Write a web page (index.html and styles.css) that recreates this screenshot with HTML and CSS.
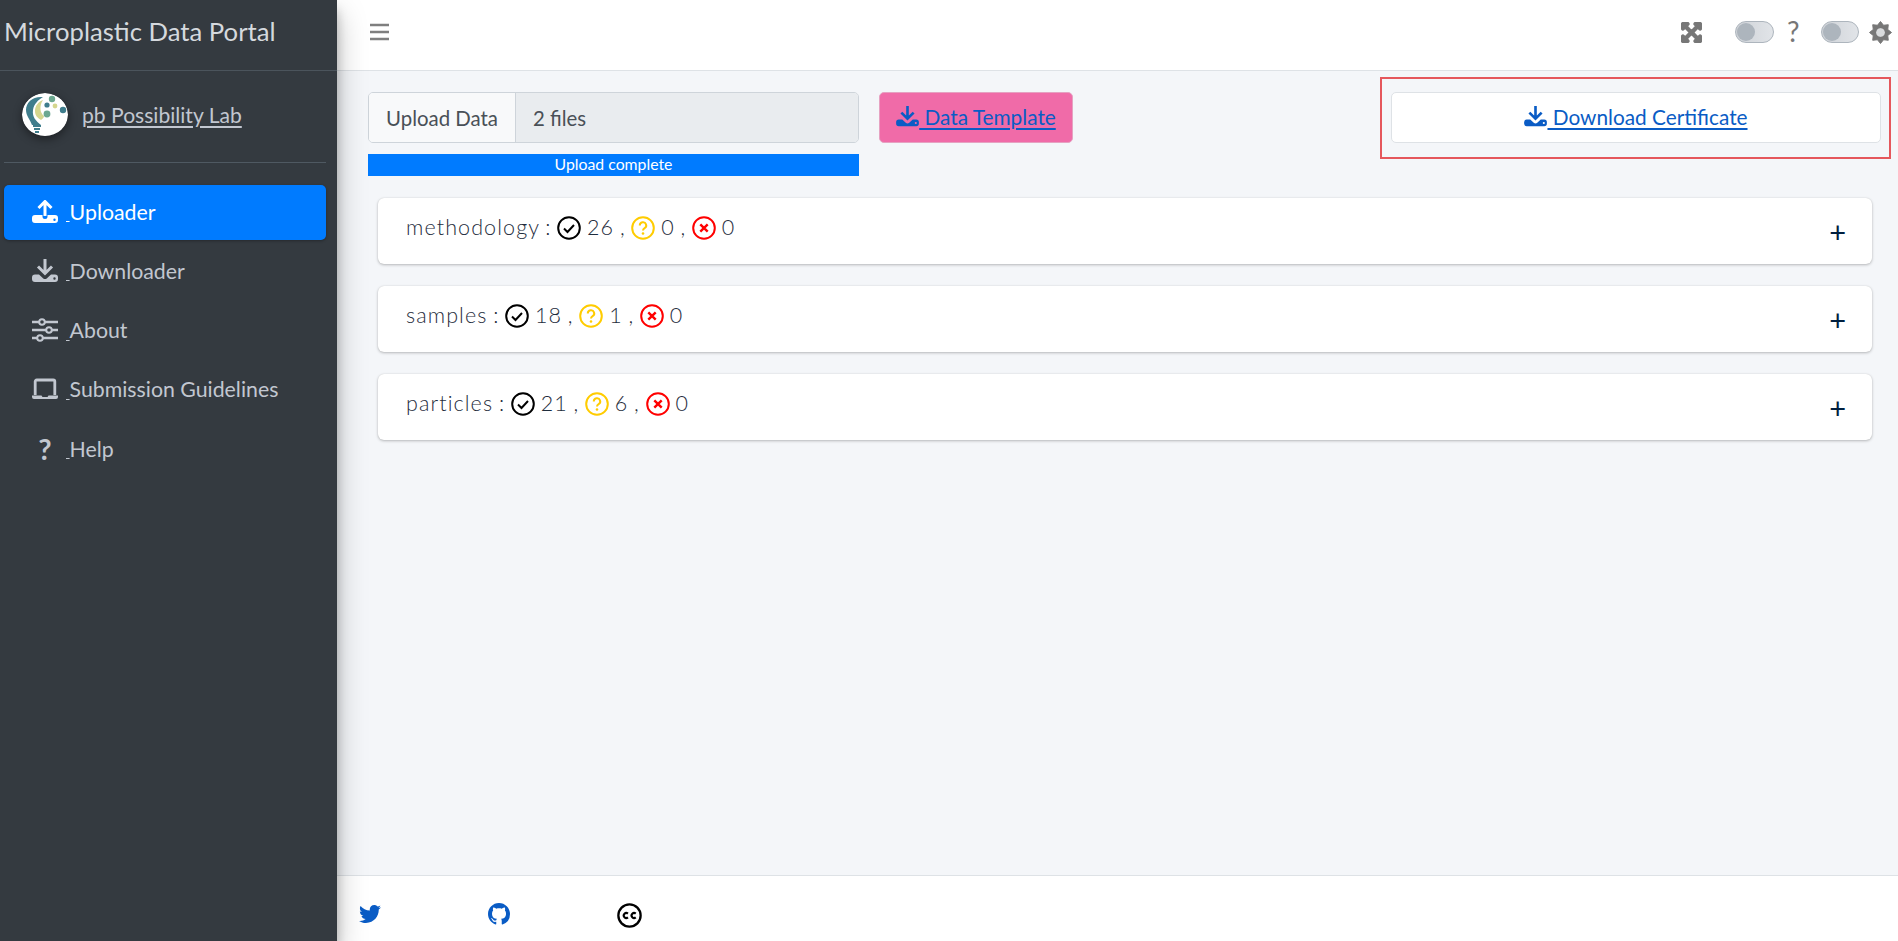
FILE: index.html
```html
<!DOCTYPE html>
<html lang="en">
<head>
<meta charset="utf-8">
<title>Microplastic Data Portal</title>
<link rel="stylesheet" href="styles.css">
</head>
<body>
<svg class="defs" width="0" height="0" aria-hidden="true">
  <defs>
    <symbol id="i-down" viewBox="0 0 26 24">
      <path d="M13 0v13.500M6 7.500l7 7 7-7" fill="none" stroke="currentColor" stroke-width="3"/>
      <path fill="currentColor" fill-rule="evenodd" d="M3 15.500h4l4 3.700a3 3 0 0 0 4 0l4-3.700h4a3 3 0 0 1 3 3v1.500a3 3 0 0 1-3 3H3a3 3 0 0 1-3-3v-1.500a3 3 0 0 1 3-3zm19.500 2.800a1.200 1.200 0 1 0 0 2.400 1.200 1.200 0 0 0 0-2.400z"/>
    </symbol>
    <symbol id="i-up" viewBox="0 0 26 24">
      <path d="M13 16V2M6.500 8L13 1.500 19.500 8" fill="none" stroke="currentColor" stroke-width="3"/>
      <path fill="currentColor" fill-rule="evenodd" d="M3 15h7.500v1.500a2.500 2.500 0 0 0 5 0V15H23a3 3 0 0 1 3 3v2a3 3 0 0 1-3 3H3a3 3 0 0 1-3-3v-2a3 3 0 0 1 3-3zm19.500 3.500a1.200 1.200 0 1 0 0 2.400 1.200 1.200 0 0 0 0-2.400z"/>
    </symbol>
    <symbol id="i-ok" viewBox="0 0 24 24">
      <circle cx="12" cy="12" r="10.800" fill="none" stroke="#000" stroke-width="2"/>
      <path d="M7 12.500l3.500 3.500L17 9" fill="none" stroke="#000" stroke-width="2"/>
    </symbol>
    <symbol id="i-warn" viewBox="0 0 24 24">
      <circle cx="12" cy="12" r="10.800" fill="none" stroke="#ffcc00" stroke-width="2"/>
      <path d="M8.800 9.500a3.200 3.200 0 1 1 4.800 2.700c-1 .6-1.600 1-1.600 2.300" fill="none" stroke="#ffcc00" stroke-width="2"/>
      <circle cx="12" cy="17.500" r="1.300" fill="#ffcc00"/>
    </symbol>
    <symbol id="i-bad" viewBox="0 0 24 24">
      <circle cx="12" cy="12" r="10.800" fill="none" stroke="#ff0000" stroke-width="2"/>
      <path d="M8.300 8.300l7.400 7.400M15.700 8.300l-7.400 7.400" fill="none" stroke="#ff0000" stroke-width="2.400"/>
    </symbol>
  </defs>
</svg>

<aside class="sidebar">
  <div class="brand">Microplastic Data Portal</div>
  <div class="user">
    <svg class="logo" viewBox="0 0 46 44" aria-hidden="true">
      <ellipse cx="23" cy="21.500" rx="23" ry="21.500" fill="#fff"/>
      <path d="M21 4C11 3 4 9 4 17c0 6 4 9 6 15h9c-5-4-9-8-8-15 1-6 5-10 10-13z" fill="#3f7d8c"/>
      <path d="M21 7c-5 2-8 6-8 11 0 5 3 7 6 9 2-1 3-3 3-4-4-3-5-10-1-16z" fill="#d5d68e"/>
      <path d="M11 33h8M12 36h6M13 39h4" stroke="#3f7d8c" stroke-width="2"/>
      <circle cx="30" cy="6" r="3.200" fill="#6ba78f"/>
      <circle cx="25" cy="12" r="2.600" fill="#3f7d8c"/>
      <circle cx="33" cy="13" r="2.400" fill="#d5d68e"/>
      <circle cx="25" cy="21" r="3.400" fill="#6ba78f"/>
      <circle cx="41" cy="17" r="3.200" fill="#3f7d8c"/>
    </svg>
    <a class="user-link" href="#">pb Possibility Lab</a>
  </div>
  <nav class="nav">
    <a class="nav-item active" href="#"><svg class="nav-icon"><use href="#i-up"/></svg><span class="gap">&nbsp;</span>Uploader</a>
    <a class="nav-item" href="#"><svg class="nav-icon"><use href="#i-down"/></svg><span class="gap">&nbsp;</span>Downloader</a>
    <a class="nav-item" href="#">
      <svg class="nav-icon" viewBox="0 0 26 24" aria-hidden="true">
        <path d="M0 4h26M0 12h26M0 20h26" stroke="currentColor" stroke-width="2.400"/>
        <circle cx="10" cy="4" r="2.800" fill="#343a40" stroke="currentColor" stroke-width="2"/>
        <circle cx="17" cy="12" r="2.800" fill="#343a40" stroke="currentColor" stroke-width="2"/>
        <circle cx="8" cy="20" r="2.800" fill="#343a40" stroke="currentColor" stroke-width="2"/>
      </svg><span class="gap">&nbsp;</span>About</a>
    <a class="nav-item" href="#">
      <svg class="nav-icon" viewBox="0 0 26 24" aria-hidden="true">
        <path d="M3.200 18V4.500A1.500 1.500 0 0 1 4.700 3h16.600a1.500 1.500 0 0 1 1.500 1.500V18" fill="none" stroke="currentColor" stroke-width="2.800"/>
        <path d="M0 18.500h9.500l1 1.500h5l1-1.500H26v1.500a2 2 0 0 1-2 2H2a2 2 0 0 1-2-2z" fill="currentColor"/>
      </svg><span class="gap">&nbsp;</span>Submission Guidelines</a>
    <a class="nav-item" href="#"><span class="nav-icon nav-q">?</span><span class="gap">&nbsp;</span>Help</a>
  </nav>
</aside>

<div class="main">
  <header class="topbar">
    <svg class="burger" viewBox="0 0 19 18" aria-hidden="true"><path d="M0 2h19M0 9h19M0 16h19" stroke="currentColor" stroke-width="2.600"/></svg>
    <div class="tools">
      <svg class="t-expand" viewBox="-20 12 488 488" aria-hidden="true"><path fill="currentColor" stroke="currentColor" stroke-width="44" stroke-linejoin="round" d="M448 344v112a23.940 23.940 0 0 1-24 24H312c-21.390 0-32.090-25.900-17-41l36.200-36.200L224 295.600 116.770 402.900 153 439c15.090 15.100 4.390 41-17 41H24a23.940 23.940 0 0 1-24-24V344c0-21.400 25.890-32.100 41-17l36.190 36.200L184.460 256 77.180 148.700 41 185c-15.100 15.100-41 4.400-41-17V56a23.940 23.940 0 0 1 24-24h112c21.390 0 32.090 25.900 17 41l-36.200 36.200L224 216.400l107.230-107.300L295 73c-15.090-15.100-4.390-41 17-41h112a23.940 23.940 0 0 1 24 24v112c0 21.400-25.890 32.100-41 17l-36.190-36.200L263.540 256l107.280 107.300L407 327.100c15.100-15.200 41-4.500 41 16.900z"/></svg>
      <span class="toggle first"></span>
      <span class="t-q">?</span>
      <span class="toggle second"></span>
      <svg class="t-gear" viewBox="0 0 24 24" aria-hidden="true"><path fill="currentColor" fill-rule="evenodd" stroke="currentColor" stroke-linejoin="round" d="M12 .5L15.140 4.420 20.130 3.870 19.580 8.860 23.500 12 19.580 15.140 20.130 20.130 15.140 19.580 12 23.500 8.860 19.580 3.870 20.130 4.420 15.140 .5 12 4.420 8.860 3.870 3.870 8.860 4.420zM12 7.500a4.500 4.500 0 1 0 0 9 4.500 4.500 0 0 0 0-9z"/><circle cx="12" cy="12" r="4.500" fill="#d9dbdd"/></svg>
    </div>
  </header>

  <section class="content">
    <div class="row">
      <div class="upload">
        <div class="input-group">
          <span class="ig-label">Upload Data</span>
          <span class="ig-value">2 files</span>
        </div>
        <div class="progress">Upload complete</div>
      </div>
      <a class="btn pink" href="#"><svg class="btn-icon"><use href="#i-down"/></svg><span> Data Template</span></a>
      <div class="redbox">
        <a class="btn white" href="#"><svg class="btn-icon"><use href="#i-down"/></svg><span> Download Certificate</span></a>
      </div>
    </div>

    <div class="cards">
      <div class="card">
        <span class="card-text">methodology : <svg class="st"><use href="#i-ok"/></svg> 26 , <svg class="st"><use href="#i-warn"/></svg> 0 , <svg class="st"><use href="#i-bad"/></svg> 0</span>
        <span class="plus">+</span>
      </div>
      <div class="card">
        <span class="card-text">samples : <svg class="st"><use href="#i-ok"/></svg> 18 , <svg class="st"><use href="#i-warn"/></svg> 1 , <svg class="st"><use href="#i-bad"/></svg> 0</span>
        <span class="plus">+</span>
      </div>
      <div class="card">
        <span class="card-text">particles : <svg class="st"><use href="#i-ok"/></svg> 21 , <svg class="st"><use href="#i-warn"/></svg> 6 , <svg class="st"><use href="#i-bad"/></svg> 0</span>
        <span class="plus">+</span>
      </div>
    </div>
  </section>

  <footer class="footer">
    <svg class="f-tw" viewBox="0 0 512 512" aria-hidden="true"><path fill="currentColor" d="M459.370 151.716c.325 4.548.325 9.097.325 13.645 0 138.720-105.583 298.558-298.558 298.558-59.452 0-114.680-17.219-161.137-47.106 8.447.974 16.568 1.299 25.340 1.299 49.055 0 94.213-16.568 130.274-44.832-46.132-.975-84.792-31.188-98.112-72.772 6.498.974 12.995 1.624 19.818 1.624 9.421 0 18.843-1.300 27.614-3.573-48.081-9.747-84.143-51.980-84.143-102.985v-1.299c13.969 7.797 30.214 12.670 47.431 13.319-28.264-18.843-46.781-51.005-46.781-87.391 0-19.492 5.197-37.360 14.294-52.954 51.655 63.675 129.300 105.258 216.365 109.807-1.624-7.797-2.599-15.918-2.599-24.040 0-57.828 46.782-104.934 104.934-104.934 30.213 0 57.502 12.670 76.670 33.137 23.715-4.548 46.456-13.320 66.599-25.340-7.798 24.366-24.366 44.833-46.132 57.827 21.117-2.273 41.584-8.122 60.426-16.243-14.292 20.791-32.161 39.308-52.628 54.253z"/></svg>
    <svg class="f-gh" viewBox="0 0 16 16" aria-hidden="true"><path fill="currentColor" d="M8 0C3.580 0 0 3.580 0 8c0 3.540 2.290 6.530 5.470 7.590.4.070.55-.17.55-.38 0-.19-.01-.82-.01-1.490-2.010.37-2.530-.49-2.690-.94-.09-.23-.48-.94-.82-1.130-.28-.15-.68-.52-.01-.53.63-.01 1.080.58 1.230.82.72 1.210 1.870.87 2.330.66.07-.52.28-.87.51-1.070-1.780-.2-3.640-.89-3.640-3.950 0-.87.31-1.590.82-2.150-.08-.2-.36-1.020.08-2.120 0 0 .67-.21 2.200.82.64-.18 1.320-.27 2-.27.68 0 1.360.09 2 .27 1.530-1.040 2.200-.82 2.200-.82.44 1.100.16 1.920.08 2.120.51.56.82 1.270.82 2.150 0 3.070-1.870 3.750-3.650 3.950.29.25.54.73.54 1.480 0 1.070-.01 1.930-.01 2.200 0 .21.15.46.55.38A8.013 8.013 0 0016 8c0-4.420-3.580-8-8-8z"/></svg>
    <svg class="f-cc" viewBox="0 0 24 24" aria-hidden="true">
      <circle cx="12" cy="12" r="10.700" fill="none" stroke="#000" stroke-width="2.200"/>
      <path d="M10.500 10.200a2.400 2.400 0 1 0 0 3.600M18 10.200a2.400 2.400 0 1 0 0 3.600" fill="none" stroke="#000" stroke-width="2"/>
    </svg>
  </footer>
</div>
</body>
</html>
```

FILE: styles.css
```css
* { box-sizing: border-box; }
html, body { height: 100%; }
body {
  margin: 0;
  display: flex;
  height: 941px;
  overflow: hidden;
  font-family: "Lato", "Noto Sans", sans-serif;
  font-size: 19px;
  color: #495057;
  background: #f4f6f9;
}
.defs { position: absolute; }

.sidebar {
  width: 337px;
  flex: none;
  background: #343a40;
  color: #c2c7d0;
  box-shadow: 0 14px 28px rgba(0,0,0,.25), 0 10px 10px rgba(0,0,0,.22);
  position: relative;
  z-index: 2;
}
.brand {
  height: 71px;
  padding: 14px 0 0 4px;
  font-size: 25.700px;
  line-height: 34px;
  color: #d5d9de;
  border-bottom: 1px solid #4b545c;
}
.user {
  display: flex;
  align-items: center;
  margin: 0 11px 0 4px;
  height: 92px;
  padding: 0 0 4px 18px;
  border-bottom: 1px solid #4f5962;
}
.logo {
  width: 46px;
  height: 44px;
  flex: none;
  border-radius: 50%;
  filter: drop-shadow(0 3px 5px rgba(0,0,0,.45));
}
.user-link {
  margin-left: 14px;
  color: #c2c7d0;
  font-size: 21.100px;
  text-underline-offset: 3px;
}
.nav {
  display: flex;
  flex-direction: column;
  gap: 4.300px;
  padding: 22px 11px 0 4px;
}
.nav-item {
  display: flex;
  align-items: center;
  height: 55px;
  padding: 0 0 2px 28px;
  color: #c2c7d0;
  text-decoration: none;
  border-radius: 5px;
  font-size: 21.300px;
}
.nav-item.active {
  background: #007bff;
  color: #fff;
  box-shadow: 0 1px 3px rgba(0,0,0,.3);
}
.nav-icon {
  width: 26px;
  height: 24px;
  flex: none;
}
.nav-q {
  font-size: 29px;
  font-weight: 700;
  line-height: 24px;
  text-align: center;
}
.gap {
  margin-left: 8px;
  text-decoration: underline;
  white-space: pre;
  font-size: 14px;
  align-self: center;
  position: relative;
  top: 3px;
}

.main {
  flex: 1;
  min-width: 0;
  display: flex;
  flex-direction: column;
}
.topbar {
  height: 71px;
  flex: none;
  background: #fff;
  border-bottom: 1px solid #dee2e6;
  display: flex;
  align-items: center;
  padding: 0 6px 6px 33px;
  color: #7f7f7f;
}
.burger { width: 19px; height: 18px; }
.tools {
  margin-left: auto;
  display: flex;
  align-items: center;
}
.t-expand { width: 21px; height: 21px; color: #777; }
.toggle {
  width: 39px;
  height: 22px;
  border-radius: 11px;
  border: 1px solid #adb5bd;
  background: linear-gradient(90deg, #cfd3d8, #e1e4e8);
  position: relative;
  display: block;
}
.toggle::before {
  content: "";
  position: absolute;
  left: 1px;
  top: 1px;
  width: 18px;
  height: 18px;
  border-radius: 50%;
  background: #adb5bd;
}
.toggle.first { margin-left: 33px; }
.toggle.second { margin-left: 19px; width: 38px; }
.t-q { margin: -3px 0 0 13px; width: 15px; font-size: 28px; line-height: 24px; color: #777; }
.t-gear { margin-left: 10px; width: 23px; height: 23px; color: #777; }

.content {
  flex: 1;
  min-height: 0;
  padding: 6px 7px 0 31px;
}
.row {
  display: flex;
  align-items: flex-start;
}
.upload { width: 491px; margin-top: 15px; flex: none; }
.input-group {
  display: flex;
  height: 51px;
  border: 1px solid #ced4da;
  border-radius: 5px;
  overflow: hidden;
}
.ig-label {
  width: 147px;
  flex: none;
  background: #f8f9fa;
  border-right: 1px solid #ced4da;
  display: flex;
  align-items: center;
  justify-content: center;
  color: #495057;
  font-size: 20.400px;
}
.ig-value {
  flex: 1;
  background: #e9ecef;
  display: flex;
  align-items: center;
  padding-left: 17px;
  font-size: 20.400px;
}
.progress {
  height: 22px;
  margin-top: 11px;
  background: #007bff;
  color: #fff;
  font-size: 15.800px;
  line-height: 20px;
  text-align: center;
}
.btn {
  display: flex;
  align-items: center;
  justify-content: center;
  height: 51px;
  padding-bottom: 2px;
  border-radius: 5px;
  border: 1px solid #dee2e6;
  color: #0a5cc5;
  font-size: 20.800px;
  white-space: pre;
  text-decoration: underline;
  text-underline-offset: 3px;
}
.btn-icon { width: 23px; height: 21px; flex: none; }
.btn.pink {
  width: 194px;
  margin: 15px 0 0 20px;
  background: #f06ba8;
  border-color: #e6a2c2;
  flex: none;
}
.btn.white {
  background: #fff;
  width: 490px;
}
.redbox {
  margin-left: auto;
  width: 511px;
  height: 82px;
  padding: 13px 0 0 9px;
  border: 2px solid #e5575c;
}

.cards {
  display: flex;
  flex-direction: column;
  gap: 22px;
  margin: 22px 19px 0 10px;
}
.card {
  height: 66px;
  background: #fff;
  border-radius: 6px;
  box-shadow: 0 0 1px rgba(0,0,0,.13), 0 1px 3px rgba(0,0,0,.25);
  display: flex;
  justify-content: space-between;
  align-items: flex-start;
  padding: 12px 26px 0 28px;
}
.card-text {
  font-size: 21.500px;
  font-weight: 300;
  color: #1f2d3d;
  letter-spacing: 1.100px;
  word-spacing: -1.200px;
  line-height: 34px;
  white-space: pre;
}
.st {
  width: 24px;
  height: 24px;
  vertical-align: -5px;
}
.plus {
  font-size: 29px;
  font-weight: 400;
  line-height: 34px;
  margin-top: 5px;
  color: #001f3f;
}

.footer {
  height: 66px;
  flex: none;
  background: #fff;
  border-top: 1px solid #dee2e6;
  display: flex;
  align-items: flex-start;
  padding: 27px 0 0 22px;
  color: #0a5cc5;
}
.f-tw { width: 22px; height: 22px; }
.f-gh { width: 22px; height: 22px; margin-left: 107px; }
.f-cc { width: 25px; height: 25px; margin-left: 107px; }
```
